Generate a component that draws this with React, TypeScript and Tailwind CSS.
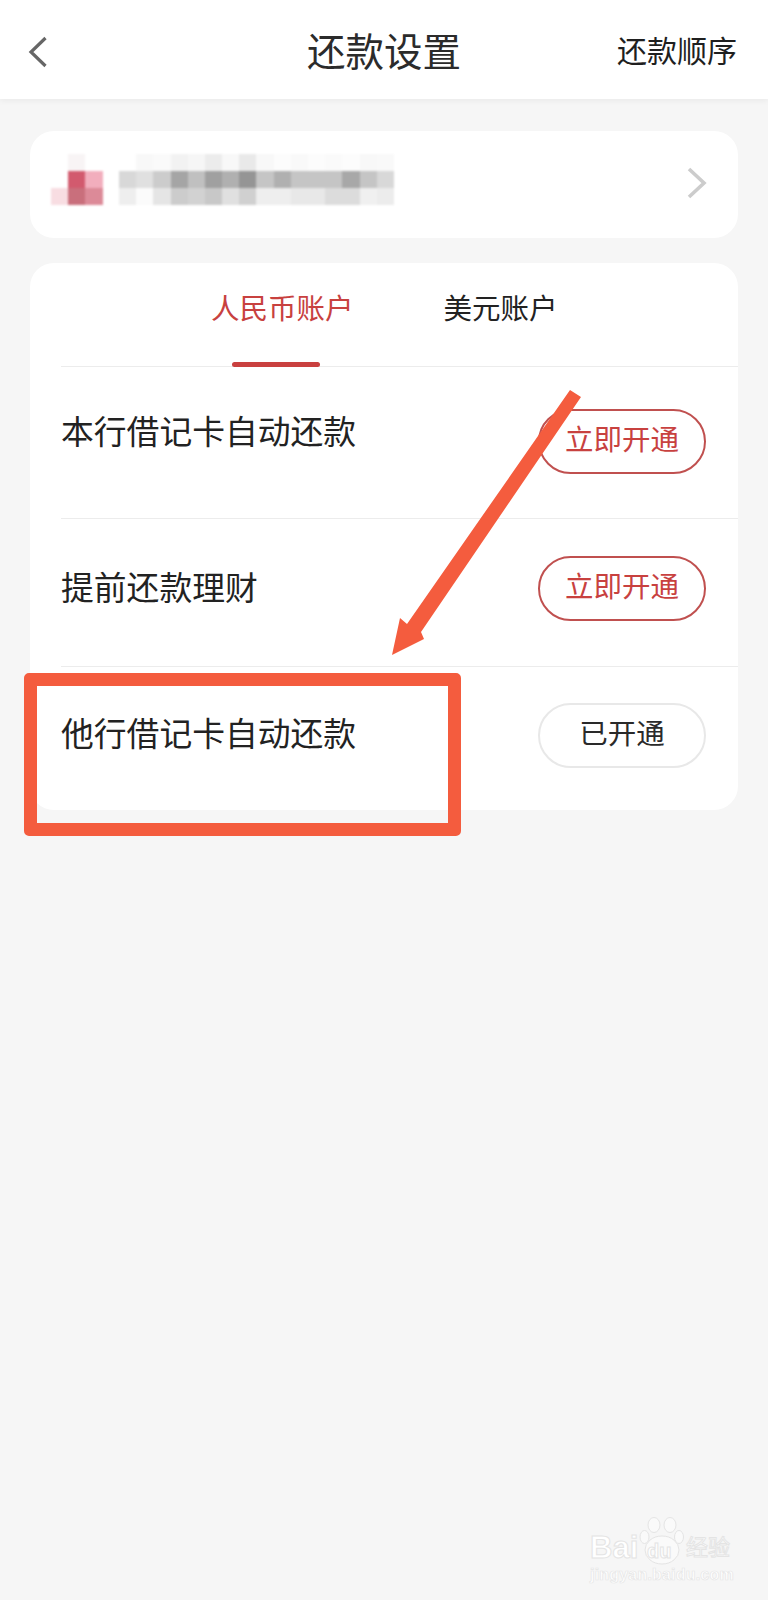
import React from "react";

const FONT = "font-['Noto_Sans_CJK_SC','Noto_Sans',sans-serif]";

// mosaic over the card number, one row per array, grey level as hex
const MOSAIC = [
  ["ffffff", "f8f8f8", "fafafa", "f2f2f2", "f6f6f6", "ececec", "f8f8f8", "e9e9e9", "f8f8f8", "fcfcfc", "f9f9f9", "fcfcfc", "fafafa", "fcfcfc", "f8f8f8", "f9f9f9"],
  ["d8d8d8", "e0e0e0", "cccccc", "a5a5a5", "c0c0c0", "a0a0a0", "b0b0b0", "959595", "c5c5c5", "b0b0b0", "c5c5c5", "c5c5c5", "c5c5c5", "a8a8a8", "c5c5c5", "d8d8d8"],
  ["eeeeee", "fbfbfb", "e5e5e5", "cccccc", "d2d2d2", "c8c8c8", "e0e0e0", "d0d0d0", "eeeeee", "eeeeee", "e8e8e8", "e8e8e8", "dcdcdc", "dcdcdc", "f0f0f0", "ececec"],
];

const LOGO = [
  ["ffffff", "f8f4f5", "ffffff"],
  ["ffffff", "d25a6e", "f2aebd"],
  ["f8dde2", "c96f7c", "dc8a98"],
];

const ROWS = [
  { label: "本行借记卡自动还款", action: "立即开通", on: false, rowClass: "h-[152px] pt-[42px]", textClass: "-mt-[12px]" },
  { label: "提前还款理财", action: "立即开通", on: false, rowClass: "h-[148px] pt-[37px]", textClass: "-mt-[3px]" },
  { label: "他行借记卡自动还款", action: "已开通", on: true, rowClass: "h-[143px] pt-[36px]", textClass: "-mt-[4px]" },
];

const Mosaic = ({ rows }: { rows: string[][] }) => (
  <div className="flex flex-col">
    {rows.map((row, i) => (
      <div key={i} className="flex">
        {row.map((c, j) => (
          <div key={j} className="h-[17px] w-[17.2px]" style={{ backgroundColor: `#${c}` }} />
        ))}
      </div>
    ))}
  </div>
);

const Row = ({ item, last }: { item: (typeof ROWS)[number]; last: boolean }) => (
  <div className={`flex items-start justify-between pr-[32px] ${item.rowClass} ${last ? "" : "border-b border-[#ececec]"}`}>
    <div className={`flex h-[65px] items-center text-[32.8px] text-[#222222] ${item.textClass}`}>{item.label}</div>
    <div
      className={`flex h-[65px] w-[168px] items-center justify-center rounded-full border-2 pb-[6px] text-[28.5px] ${
        item.on ? "border-[#e8e8e8] text-[#2a2a2a]" : "border-[#c0504f] text-[#c8413f]"
      }`}
    >
      {item.action}
    </div>
  </div>
);

const Watermark = () => (
  <div className="pointer-events-none absolute top-[1517px] left-[590px] h-[68px] w-[140px] font-['Liberation_Sans',sans-serif]">
    <div className="absolute top-[13px] left-0 text-[31px] leading-[36px] font-bold text-white [-webkit-text-stroke:1px_#e4e4e4]">Bai</div>
    <svg className="absolute top-0 left-[49px]" width="46" height="48" viewBox="0 0 46 48" fill="#fafafa" stroke="#e4e4e4" strokeWidth="1">
      <ellipse cx="15" cy="8" rx="6" ry="7.5" />
      <ellipse cx="31" cy="8" rx="6" ry="7.5" />
      <ellipse cx="5.5" cy="20" rx="4.5" ry="6.5" />
      <ellipse cx="40" cy="20" rx="4.5" ry="6.5" />
      <ellipse cx="23" cy="33" rx="17" ry="14" />
    </svg>
    <div className="absolute top-[22px] left-[57px] text-[20px] leading-[24px] font-bold text-white [-webkit-text-stroke:1px_#e4e4e4]">du</div>
    <div className={`absolute top-[13px] left-[96px] text-[22px] leading-[30px] whitespace-nowrap text-white [-webkit-text-stroke:1px_#e4e4e4] ${FONT}`}>经验</div>
    <div className="absolute top-[48px] left-0 text-[16px] leading-[20px] font-bold tracking-[0.2px] whitespace-nowrap text-white [-webkit-text-stroke:0.7px_#e6e6e6]">jingyan.baidu.com</div>
  </div>
);

export default function App() {
  return (
    <div className={`relative h-[1600px] w-[768px] overflow-hidden bg-[#f6f6f6] ${FONT}`}>
      {/* header */}
      <div className="relative flex h-[99px] items-center justify-center bg-white shadow-[0_2px_6px_rgba(0,0,0,0.05)]">
        <svg className="absolute top-[36px] left-[27px]" width="22" height="32" viewBox="0 0 22 32" fill="none" stroke="#666666" strokeWidth="3.2">
          <path d="M18.5 2 L4 16 L18.5 30" />
        </svg>
        <div className="text-[38.5px] leading-none text-[#2b2b2b]">还款设置</div>
        <div className="absolute top-[33px] right-[31px] text-[30px] leading-[32px] text-[#1f1f1f]">还款顺序</div>
      </div>

      <div className="flex flex-col gap-[25px] px-[30px] pt-[32px]">
        {/* bank card */}
        <div className="flex h-[107px] items-start rounded-[24px] bg-white pt-[23px] pr-[30px] pl-[21px]">
          <div className="flex gap-[16.4px] blur-[0.8px]">
            <Mosaic rows={LOGO} />
            <Mosaic rows={MOSAIC} />
          </div>
          <svg className="mt-[13px] ml-auto" width="22" height="32" viewBox="0 0 22 32" fill="none" stroke="#cccccc" strokeWidth="3.6">
            <path d="M3 2 L18 16 L3 30" />
          </svg>
        </div>

        {/* repayment settings */}
        <div className="h-[547px] rounded-[24px] bg-white pl-[31px]">
          <div className="relative h-[104px] border-b border-[#ececec]">
            <div className="flex gap-[90px] pt-[25px] pl-[150px] text-[28.5px] leading-[38px]">
              <span className="text-[#c8413f]">人民币账户</span>
              <span className="text-[#222222]">美元账户</span>
            </div>
            <div className="absolute top-[99px] left-[171px] h-[5px] w-[88px] rounded-full bg-[#c9403f]" />
          </div>
          {ROWS.map((item, i) => (
            <Row key={item.label} item={item} last={i === ROWS.length - 1} />
          ))}
        </div>
      </div>

      {/* red annotations on top of the screenshot */}
      <svg className="absolute top-0 left-0" width="768" height="700" viewBox="0 0 768 700" fill="#f45c3e">
        <path d="M570 390 L581 397 L421 632 L424 639 L392 655 L400 618 L407 624 Z" />
      </svg>
      <div className="absolute top-[673px] left-[24px] h-[163px] w-[437px] rounded-[5px] border-[13px] border-[#f45c3e]" />

      <Watermark />
    </div>
  );
}
